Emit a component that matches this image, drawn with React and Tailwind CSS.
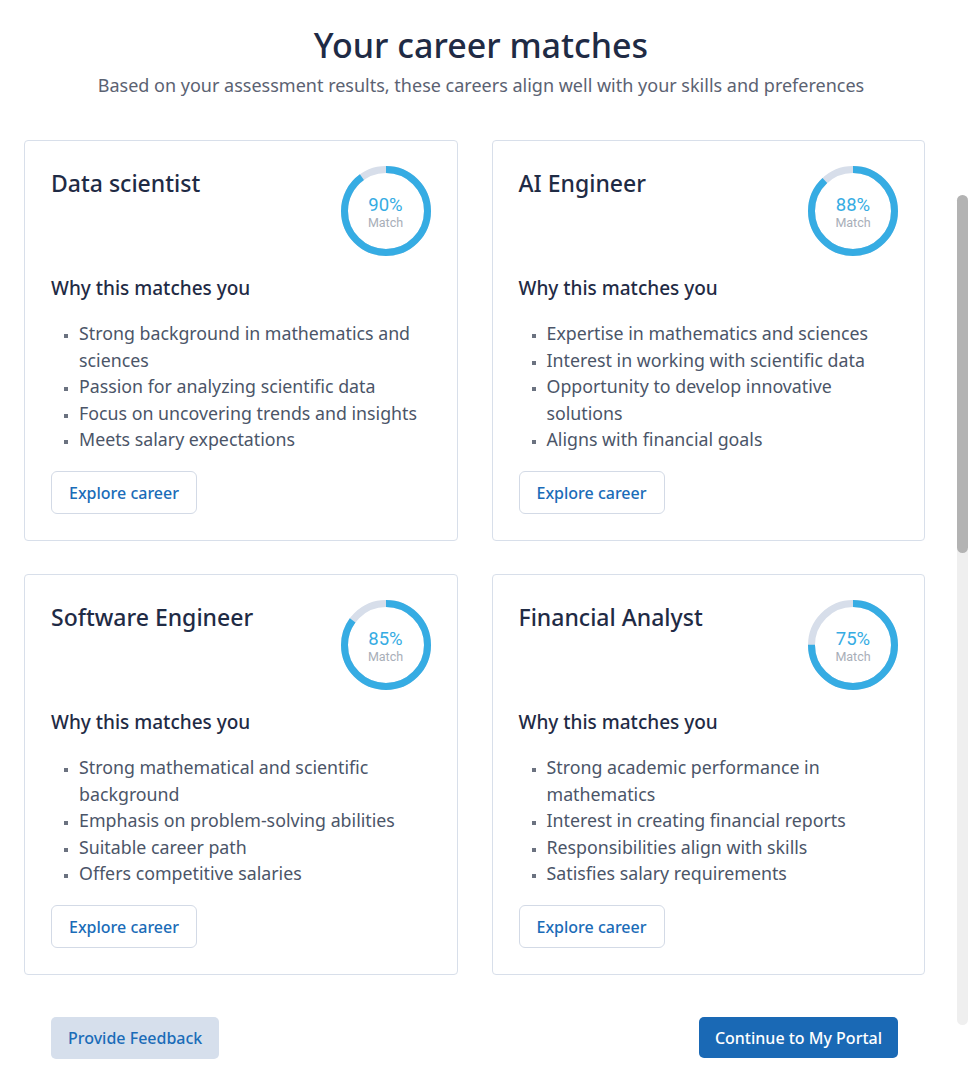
const careers = [
  {
    title: "Data scientist",
    match: 90,
    reasons: [
      "Strong background in mathematics and sciences",
      "Passion for analyzing scientific data",
      "Focus on uncovering trends and insights",
      "Meets salary expectations",
    ],
  },
  {
    title: "AI Engineer",
    match: 88,
    reasons: [
      "Expertise in mathematics and sciences",
      "Interest in working with scientific data",
      "Opportunity to develop innovative solutions",
      "Aligns with financial goals",
    ],
  },
  {
    title: "Software Engineer",
    match: 85,
    reasons: [
      "Strong mathematical and scientific background",
      "Emphasis on problem-solving abilities",
      "Suitable career path",
      "Offers competitive salaries",
    ],
  },
  {
    title: "Financial Analyst",
    match: 75,
    reasons: [
      "Strong academic performance in mathematics",
      "Interest in creating financial reports",
      "Responsibilities align with skills",
      "Satisfies salary requirements",
    ],
  },
];

const MatchRing = ({ value }) => {
  const r = 41.5;
  const c = 2 * Math.PI * r;
  return (
    <div className="relative w-[90px] h-[90px] shrink-0 ml-[1px]">
      <svg width="90" height="90" viewBox="0 0 90 90" className="-rotate-90">
        <circle cx="45" cy="45" r={r} fill="none" stroke="#d7deea" strokeWidth="7" />
        <circle
          cx="45"
          cy="45"
          r={r}
          fill="none"
          stroke="#36ace3"
          strokeWidth="7"
          strokeDasharray={`${(c * value) / 100} ${c}`}
        />
      </svg>
      <div className="absolute inset-0 flex flex-col items-center justify-center pt-[4px] font-['Roboto',sans-serif]">
        <span className="text-[18.5px] leading-[20px] text-[#36ace3]">{value}%</span>
        <span className="text-[12.5px] leading-[16px] text-[#a8aeb8]">Match</span>
      </div>
    </div>
  );
};

const CareerCard = ({ career }) => (
  <div className="border border-[#d8dfea] rounded-[4px] bg-white px-[26px] pt-[25px] pb-[26px] flex flex-col">
    <div className="flex justify-between items-start">
      <h2 className="mt-[3px] text-[23px] leading-[28px] font-medium text-[#1f2b45]">{career.title}</h2>
      <MatchRing value={career.match} />
    </div>
    <h3 className="mt-[18px] text-[19px] leading-[28px] font-medium text-[#1f2b45]">
      Why this matches you
    </h3>
    <ul className="mt-[18px] pl-[28px] list-[square] marker:text-[#6b7280] marker:text-[11px] text-[17.8px] leading-[26.6px] text-[#4b5568] h-[133px]">
      {career.reasons.map((r) => (
        <li key={r}>{r}</li>
      ))}
    </ul>
    <button className="mt-[18px] self-start h-[43px] px-[17px] rounded-[6px] border border-[#d3dae6] bg-white text-[16px] font-medium text-[#1a6cb8]">
      Explore career
    </button>
  </div>
);

export default function App() {
  return (
    <div
      className="relative w-full h-[1066px] overflow-hidden bg-white"
      style={{ fontFamily: '"Noto Sans", "Open Sans", sans-serif' }}
    >
      <header className="pt-[24px] pr-[6px] text-center">
        <h1 className="text-[34px] leading-[42px] font-medium text-[#1f2b45]">Your career matches</h1>
        <p className="mt-[6px] text-[18px] leading-[26px] text-[#5b6272]">
          Based on your assessment results, these careers align well with your skills and preferences
        </p>
      </header>

      <main className="ml-6 w-[901px] mt-[42px]">
        <div className="grid grid-cols-2 gap-x-[34px] gap-y-[33px]">
          {careers.map((c) => (
            <CareerCard key={c.title} career={c} />
          ))}
        </div>

        <div className="mt-[42px] px-[27px] flex justify-between items-start">
          <button className="h-[42px] px-[17px] rounded-[5px] bg-[#d6dfec] text-[16px] font-medium text-[#1a6cb8]">
            Provide Feedback
          </button>
          <button className="h-[41px] px-[16px] rounded-[5px] bg-[#1a69b5] text-[16px] font-medium text-white">
            Continue to My Portal
          </button>
        </div>
      </main>

      {/* overlay scrollbar */}
      <div className="absolute right-0 top-[195px] w-[11px] h-[830px] rounded-full bg-[#efefef]">
        <div className="w-full h-[358px] rounded-full bg-[#b3b3b3]" />
      </div>
    </div>
  );
}
